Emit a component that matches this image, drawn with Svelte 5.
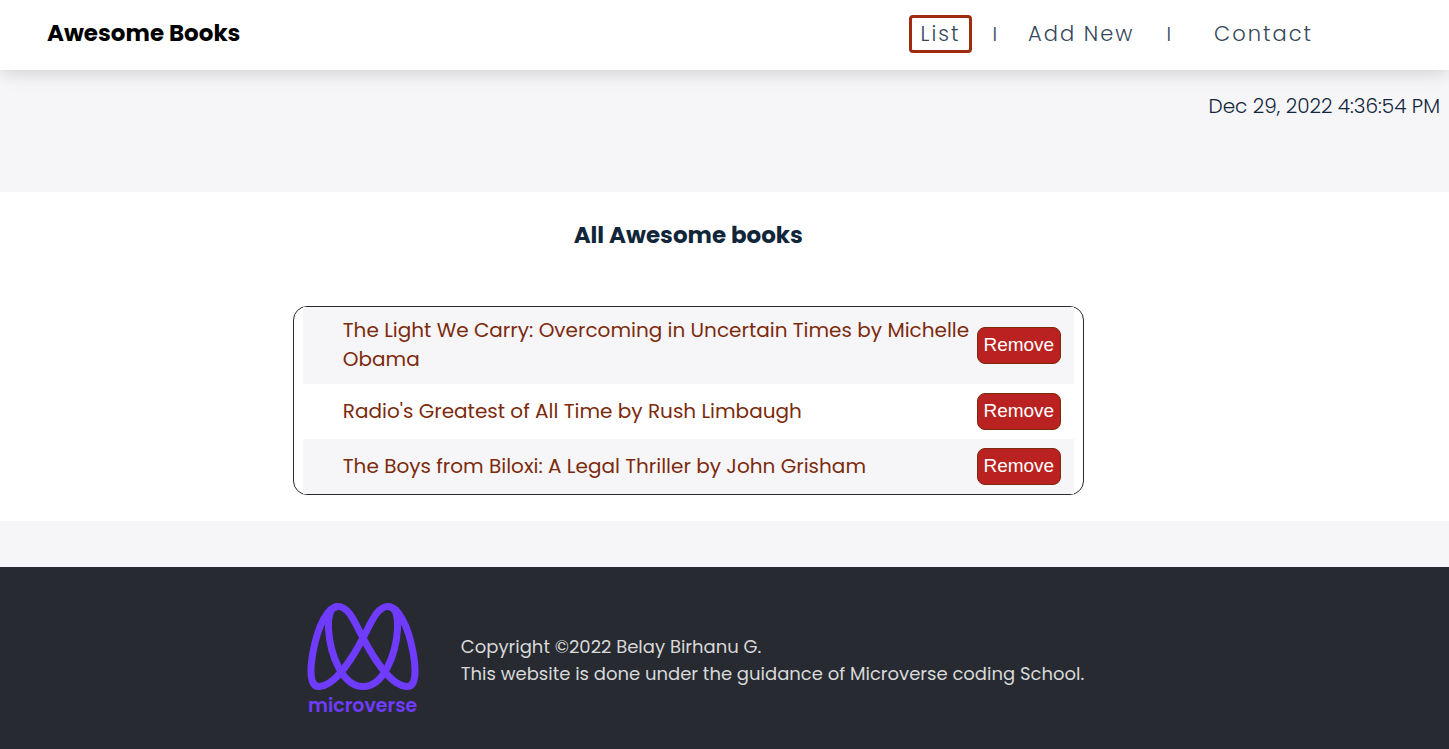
<script>
  let books = $state([
    { id: 1, title: 'The Light We Carry: Overcoming in Uncertain Times', author: 'Michelle Obama' },
    { id: 2, title: "Radio's Greatest of All Time", author: 'Rush Limbaugh' },
    { id: 3, title: 'The Boys from Biloxi: A Legal Thriller', author: 'John Grisham' }
  ]);

  function remove(id) {
    books = books.filter((book) => book.id !== id);
  }
</script>

<header>
  <h1>Awesome Books</h1>
  <nav>
    <a class="active" href="#list">List</a>
    <span class="divider">I</span>
    <a href="#add">Add New</a>
    <span class="divider">I</span>
    <a class="contact" href="#contact">Contact</a>
  </nav>
</header>

<p class="date">Dec 29, 2022 4:36:54 PM</p>

<main id="list">
  <h2>All Awesome books</h2>
  <ul>
    {#each books as book (book.id)}
      <li>
        <span class="book">{book.title} by {book.author}</span>
        <button type="button" onclick={() => remove(book.id)}>Remove</button>
      </li>
    {/each}
  </ul>
</main>

<footer>
  <svg class="logo" viewBox="0 0 112 114" role="img" aria-label="microverse">
    <g fill="none" stroke="#6f3bff" stroke-width="7">
      <path d="M12.500 85.500 C2 86.500 3 67 6 51 C11 24 21 5.500 31 5.500 C42 5.500 48 22 56 37 C67 58 84 84.500 99.500 85.500 C110 86.500 109 67 106 51 C101 24 91 5.500 81 5.500 C70 5.500 64 22 56 37 C45 58 28 84.500 12.500 85.500 Z" />
      <path d="M31 5.500 C24 5.500 21 13 21.500 28 C23 53 35 85.500 56 85.500 C77 85.500 89 53 90.500 28 C91 13 88 5.500 81 5.500" />
    </g>
    <text x="1" y="111">microverse</text>
  </svg>
  <p>Copyright ©2022 Belay Birhanu G.<br />This website is done under the guidance of Microverse coding School.</p>
</footer>

<style>
  :global(body) {
    margin: 0;
    background: #f6f6f9;
    color: #12263a;
    font-family: Poppins, Inter, sans-serif;
  }

  header {
    display: flex;
    align-items: center;
    justify-content: space-between;
    height: 70px;
    box-sizing: border-box;
    padding: 0 124px 2px 47px;
    background: #fff;
    box-shadow: 0 0 20px rgba(0, 0, 0, 0.2);
  }

  h1 {
    margin: 0;
    padding-bottom: 2px;
    color: #000;
    font-size: 23px;
    font-weight: 700;
    line-height: 32px;
  }

  nav {
    display: flex;
    align-items: center;
  }

  nav a {
    box-sizing: border-box;
    height: 38px;
    padding: 0 9px;
    border: 3px solid transparent;
    border-radius: 4px;
    color: #34475a;
    font-size: 21px;
    font-weight: 300;
    line-height: 32px;
    letter-spacing: 2px;
    text-decoration: none;
  }

  nav a.active {
    border-color: #a02c10;
  }

  nav a.contact {
    margin-left: 12px;
  }

  .divider {
    margin: 0 19px 0 20px;
    color: #34475a;
    font-size: 20px;
    font-weight: 300;
    line-height: 32px;
  }

  .date {
    margin: 0;
    padding: 20px 9px 70px;
    font-size: 20px;
    font-weight: 300;
    line-height: 32px;
    text-align: right;
  }

  main {
    padding: 27px 5% 26px 0;
    background: #fff;
  }

  h2 {
    margin: 0 0 54px;
    font-size: 23px;
    font-weight: 700;
    line-height: 33px;
    text-align: center;
  }

  ul {
    box-sizing: border-box;
    width: 791px;
    max-width: 90%;
    margin: 0 auto;
    padding: 0 9px;
    border: 1px solid #272a31;
    border-radius: 14px;
    list-style: none;
  }

  li {
    display: flex;
    align-items: center;
    justify-content: space-between;
    padding: 9px 13px 9px 40px;
  }

  li:nth-child(odd) {
    background: #f6f6f9;
  }

  .book {
    padding-bottom: 1px;
    color: #7c2a0c;
    font-size: 20px;
    line-height: 29px;
  }

  button {
    flex: none;
    min-width: 84px;
    height: 37px;
    padding: 0 5px 2px;
    border: 1px solid #7c2a0c;
    border-radius: 8px;
    background: #b92220;
    color: #fff;
    font-family: "Liberation Sans", Arial, sans-serif;
    font-size: 19px;
  }

  footer {
    display: flex;
    align-items: center;
    justify-content: center;
    gap: 42px;
    margin-top: 46px;
    padding: 34px 4% 34px 0;
    background: #272a31;
    color: #d9d9d9;
  }

  .logo {
    flex: none;
    width: 112px;
    height: 114px;
    overflow: visible;
  }

  .logo text {
    fill: #6f3bff;
    font-size: 19px;
    font-weight: 600;
  }

  footer p {
    margin: 0;
    padding-top: 4px;
    font-size: 18px;
    line-height: 27px;
  }
</style>
